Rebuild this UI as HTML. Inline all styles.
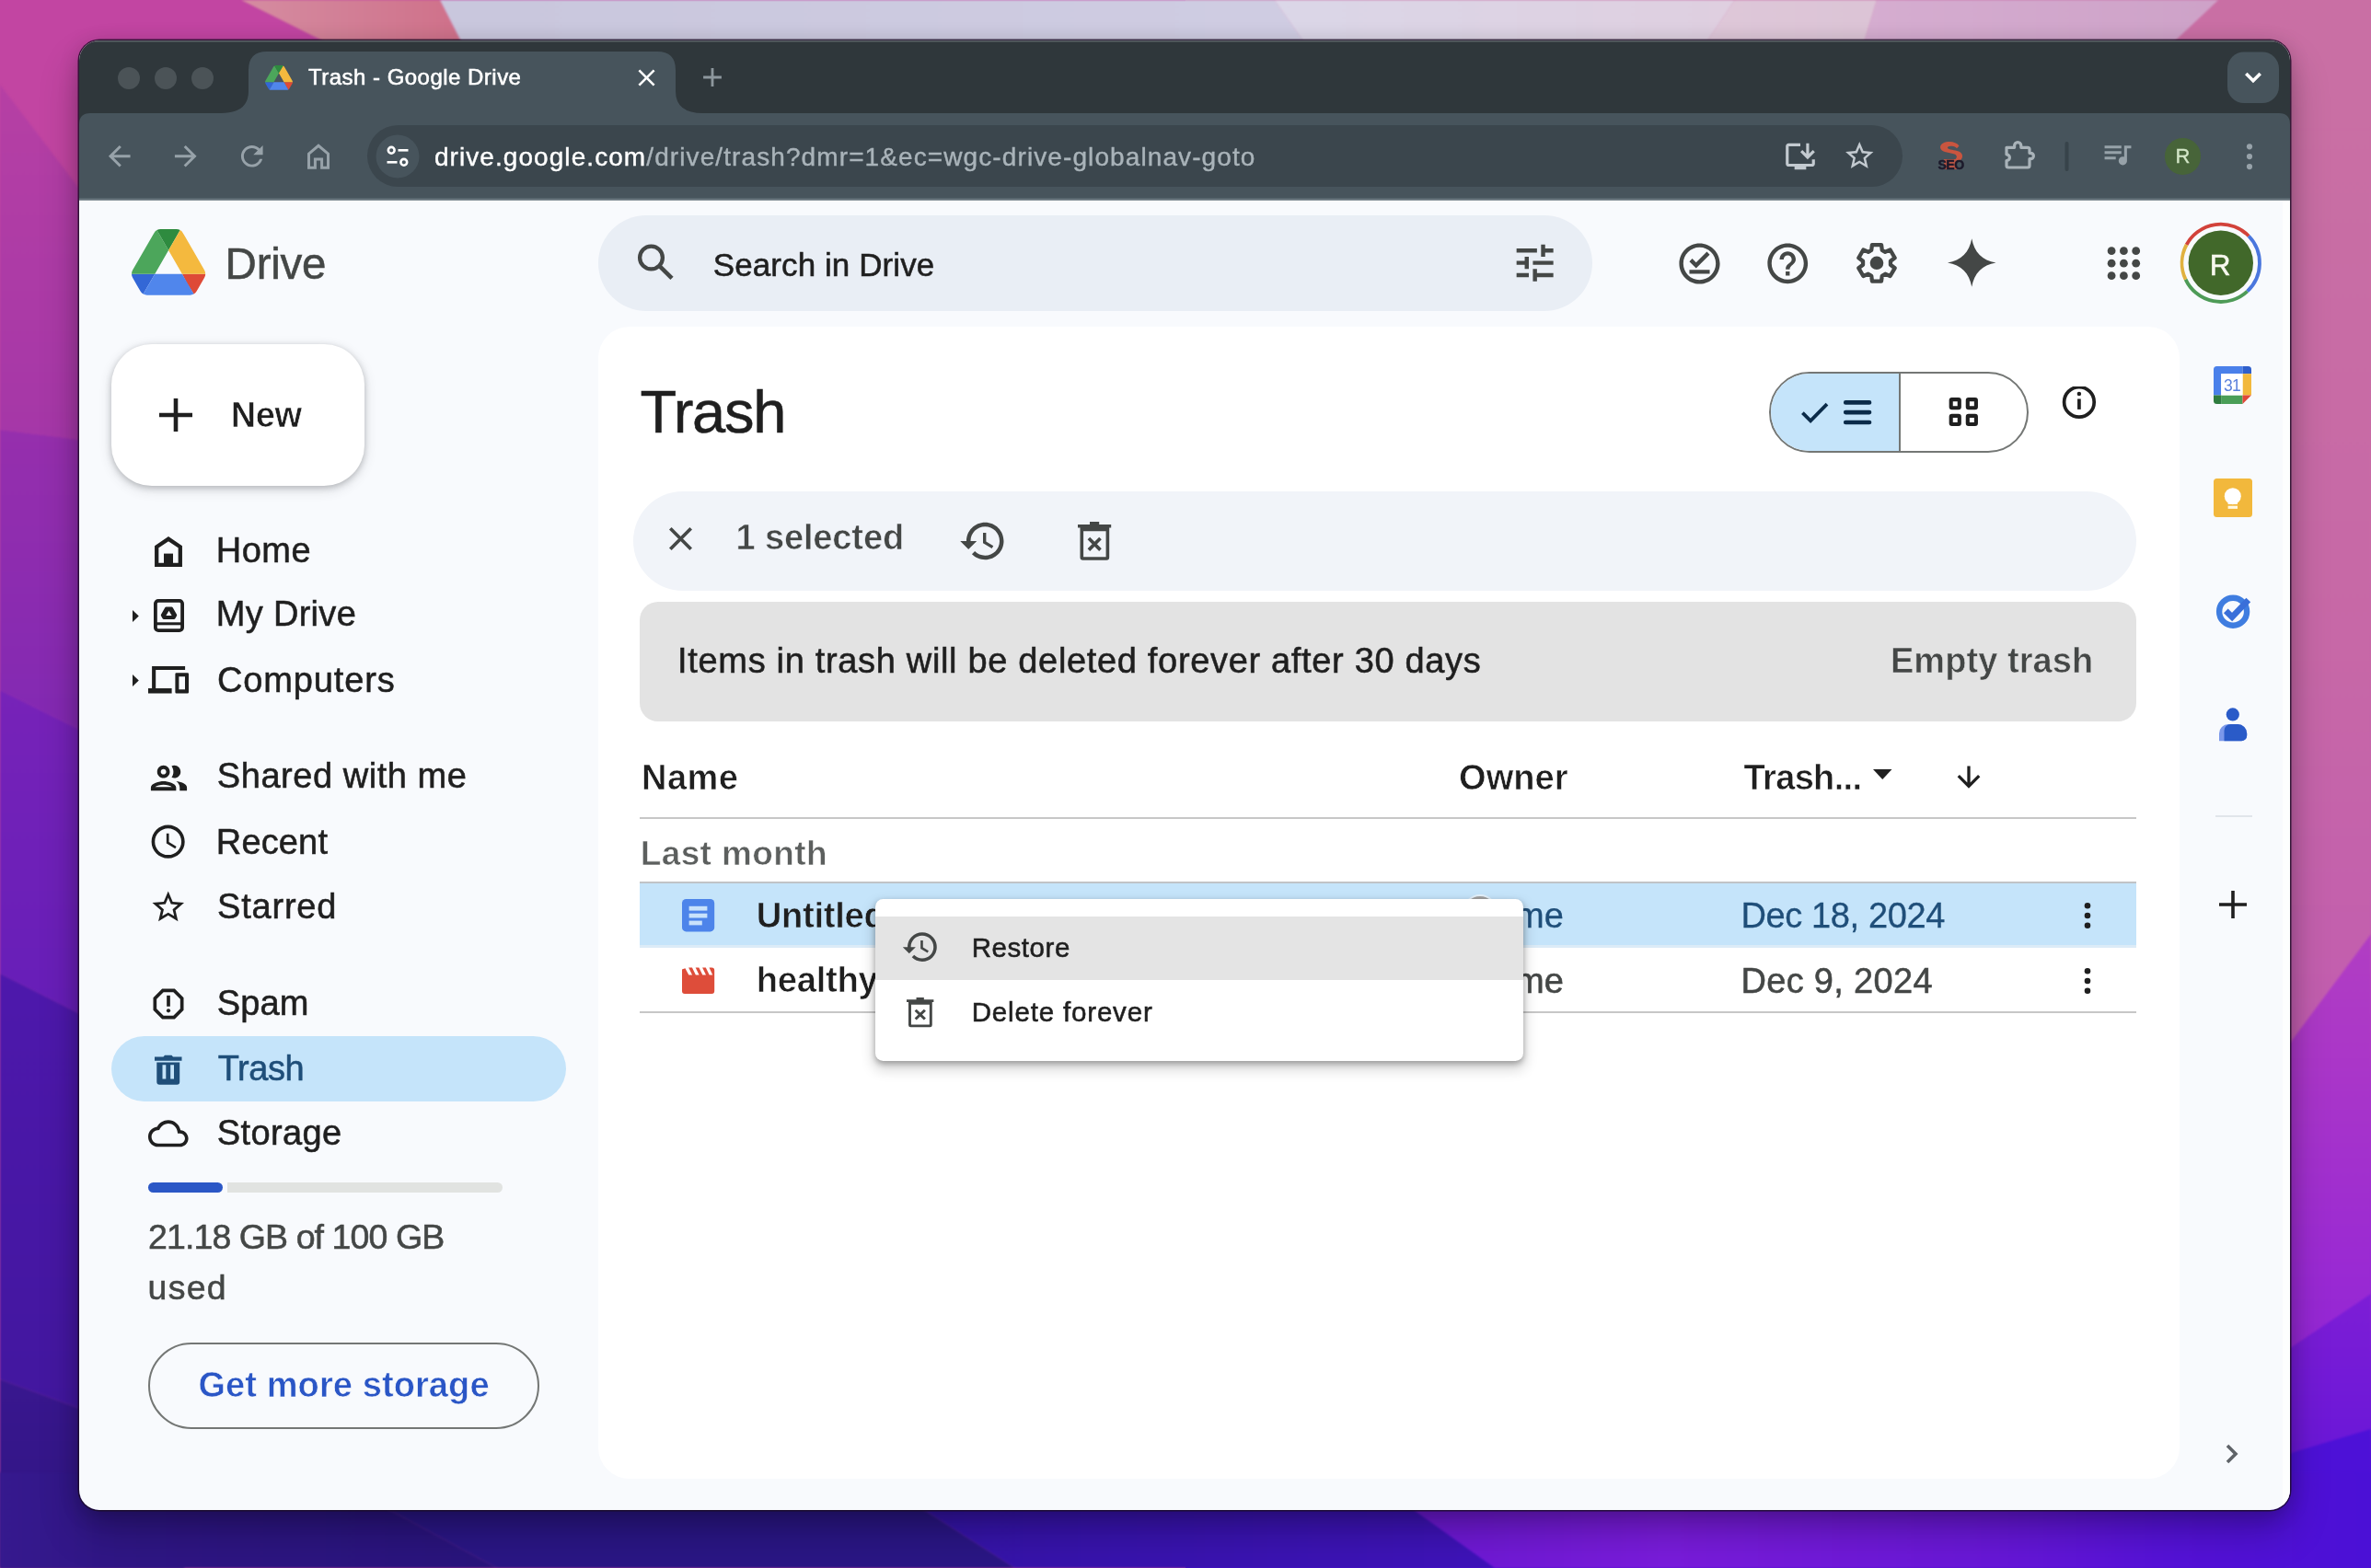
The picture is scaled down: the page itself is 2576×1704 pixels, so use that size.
<!DOCTYPE html>
<html><head><meta charset="utf-8"><title>Trash - Google Drive</title>
<style>
html,body{margin:0;padding:0;width:2576px;height:1704px;overflow:hidden;background:#5a1cb0;}
body{font-family:"Liberation Sans",sans-serif;position:relative;}
.t{position:absolute;white-space:nowrap;line-height:1;}
.i{position:absolute;display:block;overflow:visible;}
.a{position:absolute;}
</style></head><body>
<div class="a" style="left:0;top:0;width:2576px;height:1704px;overflow:hidden;will-change:transform">

<svg class="a" style="left:0;top:0" width="2576" height="1704" viewBox="0 0 2576 1704">
<defs>
<linearGradient id="gl" x1="0" y1="0" x2="0" y2="1">
 <stop offset="0" stop-color="#c145a3"/><stop offset="0.10" stop-color="#bb42a3"/>
 <stop offset="0.13" stop-color="#ad3ba6"/>
 <stop offset="0.26" stop-color="#9c32ab"/><stop offset="0.29" stop-color="#8f2daf"/>
 <stop offset="0.40" stop-color="#8328b3"/>
 <stop offset="0.55" stop-color="#6b1fb8"/><stop offset="0.615" stop-color="#621db6"/>
 <stop offset="0.645" stop-color="#4c18aa"/><stop offset="0.86" stop-color="#43179f"/>
 <stop offset="0.895" stop-color="#38178f"/><stop offset="1" stop-color="#2e1580"/>
</linearGradient>
<linearGradient id="gr" x1="0" y1="0" x2="0" y2="1">
 <stop offset="0" stop-color="#c96fa4"/><stop offset="0.35" stop-color="#c76aa6"/>
 <stop offset="0.60" stop-color="#c25cb0"/><stop offset="0.66" stop-color="#b23fc3"/>
 <stop offset="0.78" stop-color="#9c2bd2"/><stop offset="0.84" stop-color="#8f26d4"/>
 <stop offset="0.87" stop-color="#7a1cd6"/><stop offset="0.915" stop-color="#6a18d7"/>
 <stop offset="0.935" stop-color="#5212d8"/><stop offset="1" stop-color="#4b10d6"/>
</linearGradient>
<linearGradient id="g1" x1="0" y1="0" x2="1" y2="0"><stop offset="0" stop-color="#d58ca1"/><stop offset="1" stop-color="#ce6b85"/></linearGradient>
<linearGradient id="g2" x1="0" y1="0" x2="1" y2="0"><stop offset="0" stop-color="#c9c7dd"/><stop offset="1" stop-color="#d0cde3"/></linearGradient>
<linearGradient id="g3" x1="0" y1="0" x2="1" y2="0"><stop offset="0" stop-color="#dbd7e8"/><stop offset="1" stop-color="#dfcfe0"/></linearGradient>
<linearGradient id="g3b" x1="0" y1="0" x2="1" y2="0"><stop offset="0" stop-color="#dfc9da"/><stop offset="1" stop-color="#dcc4d6"/></linearGradient>
<linearGradient id="g4" x1="0" y1="0" x2="1" y2="0"><stop offset="0" stop-color="#d6aed1"/><stop offset="1" stop-color="#cea2c8"/></linearGradient>
<linearGradient id="gb" x1="0" y1="0" x2="1" y2="0">
 <stop offset="0" stop-color="#2f1582"/><stop offset="0.15" stop-color="#2a157c"/>
 <stop offset="0.40" stop-color="#2c1688"/><stop offset="0.55" stop-color="#3c17b0"/>
 <stop offset="0.62" stop-color="#5c1cc8"/><stop offset="0.72" stop-color="#6d1fd4"/>
 <stop offset="0.85" stop-color="#6419d6"/><stop offset="0.95" stop-color="#4d11d6"/>
 <stop offset="1" stop-color="#4b10d6"/>
</linearGradient>
<linearGradient id="gbA" x1="0" y1="0" x2="1" y2="0"><stop offset="0" stop-color="#36198e"/><stop offset=".25" stop-color="#2f1685"/><stop offset="1" stop-color="#29147c"/></linearGradient>
<linearGradient id="gbC" x1="0" y1="0" x2="1" y2="0"><stop offset="0" stop-color="#3414a6"/><stop offset="1" stop-color="#3f13ba"/></linearGradient>
<linearGradient id="gbD" x1="0" y1="0" x2="1" y2="0"><stop offset="0" stop-color="#6a18d2"/><stop offset=".3" stop-color="#7a1cdc"/><stop offset=".6" stop-color="#6a18d8"/><stop offset=".8" stop-color="#5512d8"/><stop offset="1" stop-color="#4b10d6"/></linearGradient>
<linearGradient id="grA" gradientUnits="userSpaceOnUse" x1="0" y1="140" x2="0" y2="1279"><stop offset="0" stop-color="#c96fa4"/><stop offset=".5" stop-color="#c768a7"/><stop offset=".8" stop-color="#c35fae"/><stop offset="1" stop-color="#bf58b3"/></linearGradient>
<linearGradient id="grB" gradientUnits="userSpaceOnUse" x1="0" y1="1015" x2="0" y2="1538"><stop offset="0" stop-color="#b13ec3"/><stop offset=".25" stop-color="#ab37c8"/><stop offset=".7" stop-color="#9a2ad3"/><stop offset="1" stop-color="#8e24d6"/></linearGradient>
<linearGradient id="grC" gradientUnits="userSpaceOnUse" x1="0" y1="1406" x2="0" y2="1612"><stop offset="0" stop-color="#7d1ed6"/><stop offset="1" stop-color="#6716d8"/></linearGradient>
<linearGradient id="glA" gradientUnits="userSpaceOnUse" x1="0" y1="92" x2="0" y2="480"><stop offset="0" stop-color="#b640a4"/><stop offset="1" stop-color="#a537a8"/></linearGradient>
<linearGradient id="glB" gradientUnits="userSpaceOnUse" x1="0" y1="467" x2="0" y2="800"><stop offset="0" stop-color="#962fad"/><stop offset="1" stop-color="#8229b3"/></linearGradient>
<linearGradient id="glC" gradientUnits="userSpaceOnUse" x1="0" y1="750" x2="0" y2="1110"><stop offset="0" stop-color="#7723b8"/><stop offset="1" stop-color="#661eb8"/></linearGradient>
<linearGradient id="glD" gradientUnits="userSpaceOnUse" x1="0" y1="1058" x2="0" y2="1540"><stop offset="0" stop-color="#4e18ac"/><stop offset="1" stop-color="#42179f"/></linearGradient>
<linearGradient id="glE" gradientUnits="userSpaceOnUse" x1="0" y1="1499" x2="0" y2="1704"><stop offset="0" stop-color="#39178f"/><stop offset="1" stop-color="#2f1582"/></linearGradient>
<linearGradient id="fadeB" x1="0" y1="0" x2="0" y2="1"><stop offset="0" stop-color="#000"/><stop offset="0.45" stop-color="#fff"/></linearGradient>
<mask id="mB"><rect x="0" y="1570" width="2576" height="134" fill="url(#fadeB)"/></mask>
<filter id="bl" x="-2%" y="-20%" width="104%" height="140%" color-interpolation-filters="sRGB"><feGaussianBlur stdDeviation="1.2"/></filter>
</defs>
<rect x="0" y="0" width="1288" height="1704" fill="#c245a2"/>
<g filter="url(#bl)">
<path d="M0 92 L200 354 L200 492 L0 467Z" fill="url(#glA)"/>
<path d="M0 467 L200 492 L200 849 L0 750Z" fill="url(#glB)"/>
<path d="M0 750 L200 849 L200 1159 L0 1058Z" fill="url(#glC)"/>
<path d="M0 1058 L200 1159 L200 1572 L0 1499Z" fill="url(#glD)"/>
<path d="M0 1499 L200 1572 L200 1704 L0 1704Z" fill="url(#glE)"/>
</g>
<rect x="1288" y="0" width="1288" height="1704" fill="url(#gr)"/>
<g filter="url(#bl)">
<path d="M2380 140 L2576 140 L2576 1015 L2380 1279Z" fill="url(#grA)"/>
<path d="M2576 1015 L2380 1279 L2380 1538 L2576 1406Z" fill="url(#grB)"/>
<path d="M2576 1406 L2380 1538 L2380 1612 L2576 1553Z" fill="url(#grC)"/>
<path d="M2576 1553 L2380 1612 L2380 1704 L2576 1704Z" fill="#4d11d7"/>
</g>
<g filter="url(#bl)">
<path d="M262 0 L478 0 L549.6 140 L542.0 140Z" fill="url(#g1)"/>
<path d="M478 0 L1384.5 0 L1483.8 140 L549.6 140Z" fill="url(#g2)"/>
<path d="M1384.5 0 L1884.6 0 L1791.5 140 L1483.8 140Z" fill="url(#g3)"/>
<path d="M1884.6 0 L2039 0 L1996.7 140 L1791.5 140Z" fill="url(#g3b)"/>
<path d="M2039 0 L2410.4 0 L2261.9 140 L1996.7 140Z" fill="url(#g4)"/>
<path d="M2410.4 0 L2576 0 L2576 140 L2261.9 140Z" fill="#c96fa4"/>
</g>
<g filter="url(#bl)">
<path d="M0 1600 L0 1704 L539.8 1704 L348 1600Z" fill="url(#gbA)"/>
<path d="M348 1600 L539.8 1704 L1102.700 1704 L940 1600Z" fill="#2a1685"/>
<path d="M940 1600 L1102.700 1704 L1624 1704 L1479 1600Z" fill="url(#gbC)"/>
<path d="M1479 1600 L1624 1704 L2576 1704 L2576 1600Z" fill="url(#gbD)"/>
</g>
</svg>


<div class="a" style="left:86px;top:44px;width:2402px;height:1597px;border-radius:22px;box-shadow:0 0 0 1.5px rgba(25,10,35,.8),0 24px 44px 0px rgba(0,0,0,.24),0 5px 22px 0 rgba(0,0,0,.20);"></div>
<div id="win" class="a" style="left:86px;top:44px;width:2402px;height:1597px;border-radius:22px;overflow:hidden;background:#f8fafd;">
<div class="a" style="left:-86px;top:-44px;width:2576px;height:1704px;">
<div class="a" style="left:86px;top:44px;width:2402px;height:173px;background:#2f373b"></div>

<svg class="a" style="left:0;top:0" width="2576" height="230" viewBox="0 0 2576 230">
<path d="M86 217.500 V135 Q86 123 98 123 H240 Q270 123 270 99 V76 Q270 56 290 56 H714 Q734 56 734 76 V99 Q734 123 764 123 H2476 Q2488 123 2488 135 V217.500 Z" fill="#47545c"/>
<rect x="86" y="215.500" width="2402" height="2" fill="#65727a"/>
<rect x="399" y="136" width="1668" height="67" rx="33.500" fill="#3b464d"/>
<circle cx="432" cy="170" r="23.500" fill="#47545c"/>
<rect x="2420" y="56.500" width="56" height="55.500" rx="18" fill="#47545c"/>
<circle cx="140" cy="85" r="12" fill="#4b5357"/><circle cx="180" cy="85" r="12" fill="#4b5357"/><circle cx="220" cy="85" r="12" fill="#4b5357"/>
<rect x="86" y="44" width="2402" height="1.500" fill="#6a7176" opacity=".75"/>
<rect x="2243.500" y="154" width="4" height="32" rx="2" fill="#37434a"/>
<path d="M2440.300 80 L2448 87.700 L2455.700 80" fill="none" stroke="#fff" stroke-width="3.600"/>
</svg>
<svg class="i" style="left:287.500px;top:70.500px" width="30" height="26.800" viewBox="0 0 87.300 78"><path d="m6.6 66.85 3.85 6.65c.8 1.4 1.95 2.5 3.3 3.3l13.750-23.800h-27.500c0 1.550.4 3.100 1.200 4.500z" fill="#3367d6"/>
<path d="m43.650 25-13.750-23.800c-1.350.8-2.500 1.900-3.300 3.300l-25.400 44a9.060 9.060 0 0 0 -1.200 4.500h27.500z" fill="#4ca65b"/>
<path d="m73.550 76.800c1.350-.8 2.500-1.900 3.300-3.300l1.600-2.750 7.650-13.250c.8-1.400 1.200-2.950 1.200-4.500h-27.502l5.852 11.500z" fill="#de4a37"/>
<path d="m43.650 25 13.750-23.800c-1.350-.8-2.900-1.200-4.500-1.200h-18.500c-1.600 0-3.150.45-4.500 1.200z" fill="#2e8b3f"/>
<path d="m59.800 53h-32.300l-13.750 23.800c1.350.8 2.900 1.200 4.500 1.200h50.800c1.600 0 3.150-.45 4.500-1.200z" fill="#5086ec"/>
<path d="m73.400 26.500-12.700-22c-.8-1.400-1.950-2.500-3.300-3.300l-13.750 23.800 16.150 28h27.450c0-1.550-.4-3.100-1.200-4.500z" fill="#f4b93e"/></svg>
<div class="t" style="left:335px;top:72.1px;font-size:24px;color:#fff;font-weight:400;-webkit-text-stroke:0.55px currentColor;letter-spacing:0.48px;">Trash - Google Drive</div>
<svg class="i" style="left:686.5px;top:68.5px;" width="31" height="31" viewBox="0 0 24 24"><path d="M19 6.410L17.590 5 12 10.590 6.410 5 5 6.410 10.590 12 5 17.590 6.410 19 12 13.410 17.590 19 19 17.590 13.410 12z" fill="#fff"/></svg>
<svg class="i" style="left:757.0px;top:67.0px;" width="34" height="34" viewBox="0 0 24 24"><path d="M19 13h-6v6h-2v-6H5v-2h6V5h2v6h6v2z" fill="#8d979d"/></svg>
<svg class="i" style="left:112.2px;top:152.2px;" width="35.5" height="35.5" viewBox="0 0 24 24"><path d="M20 11H7.830l5.590-5.590L12 4l-8 8 8 8 1.410-1.410L7.830 13H20v-2z" fill="#97a2a9"/></svg>
<svg class="i" style="left:183.9px;top:152.2px;" width="35.5" height="35.5" viewBox="0 0 24 24"><path d="M12 4l-1.410 1.410L16.170 11H4v2h12.170l-5.580 5.590L12 20l8-8z" fill="#97a2a9"/></svg>
<svg class="i" style="left:256.4px;top:152.2px;" width="35.5" height="35.5" viewBox="0 0 24 24"><path d="M17.650 6.350C16.200 4.900 14.210 4 12 4c-4.420 0-7.990 3.580-7.990 8s3.570 8 7.990 8c3.730 0 6.840-2.550 7.730-6h-2.080c-.82 2.330-3.040 4-5.650 4-3.310 0-6-2.690-6-6s2.690-6 6-6c1.660 0 3.140.69 4.220 1.780L13 11h7V4l-2.350 2.350z" fill="#97a2a9"/></svg>
<svg class="i" style="left:332px;top:154px" width="28" height="32" viewBox="0 0 28 32"><path d="M3.500 28.300 V13.200 L14 4.300 L24.500 13.200 V28.300 H17.600 V19 H10.400 V28.300 Z" fill="none" stroke="#97a2a9" stroke-width="3" stroke-linejoin="miter"/></svg>
<svg class="i" style="left:417px;top:155px" width="30" height="30" viewBox="0 0 30 30">
<circle cx="8.200" cy="8.300" r="3.400" fill="none" stroke="#fff" stroke-width="2.600"/><rect x="15.500" y="7" width="11" height="2.600" fill="#fff"/>
<circle cx="21.800" cy="21.300" r="3.400" fill="none" stroke="#fff" stroke-width="2.600"/><rect x="3.500" y="20" width="11" height="2.600" fill="#fff"/></svg>
<div class="t" style="left:471.900px;top:156.6px;font-size:28px;letter-spacing:1.07px;color:#fff;-webkit-text-stroke:.4px currentColor">drive.google.com<span style="color:#a9b3b9;letter-spacing:1.1px">/drive/trash?dmr=1&amp;ec=wgc-drive-globalnav-goto</span></div>
<svg class="i" style="left:1937.1px;top:150.6px;" width="38" height="38" viewBox="0 0 24 24"><path d="M20 17H4V5h8V3H4c-1.110 0-2 .89-2 2v12c0 1.100.89 2 2 2h4v2h8v-2h4c1.100 0 2-.9 2-2v-3h-2v3z M17 14l5-5-1.410-1.410L18 10.170V3h-2v7.170l-2.590-2.580L12 9z" fill="#c3cad0"/></svg>
<svg class="i" style="left:2001.5px;top:151.2px;" width="36.5" height="36.5" viewBox="0 0 24 24"><path d="M22 9.240l-7.190-.62L12 2 9.190 8.630 2 9.240l5.460 4.730L5.820 21 12 17.270 18.180 21l-1.630-7.030L22 9.240zM12 15.400l-3.760 2.270 1-4.280-3.320-2.880 4.380-.38L12 6.100l1.710 4.040 4.380.38-3.320 2.880 1 4.280L12 15.400z" fill="#c3cad0"/></svg>
<svg class="i" style="left:2103px;top:152px" width="33" height="34" viewBox="0 0 33 34">
<path d="M25.500 6.500 C23 2.500 17 1.200 11.500 2.200 C6.500 3.200 4 6.600 5.600 10 C7.500 13.600 16 13.800 20.500 15.600 C24 17 23.500 20.500 20 22 L27 22 C30.500 19 29.500 14.500 25 12.600 C21 10.900 14 10.800 13 9 C12.300 7.600 14.500 6.500 17.500 6.800 C20 7 22 8 23 9.200 Z" fill="#c9553f"/>
<rect x="9" y="21" width="14" height="11" fill="#c9553f" opacity=".85"/>
<text x="16.500" y="31.500" font-family="Liberation Sans, sans-serif" font-weight="700" font-size="14" text-anchor="middle" fill="#1c1a2b" stroke="#1c1a2b" stroke-width=".5" letter-spacing="-.5">SEO</text></svg>
<svg class="i" style="left:2176.500px;top:152px" width="35" height="34" viewBox="0 0 35 34"><path d="M3 8.300 H11.600 V6.200 A3.600 3.600 0 0 1 18.800 6.200 V8.300 H26 A2 2 0 0 1 28 10.300 V14.300 H29.200 A3.200 3.200 0 0 1 29.200 20.700 H28 V28 A2 2 0 0 1 26 30 H5 A2 2 0 0 1 3 28 V22.600 A3.400 3.400 0 0 0 3 15.800 Z" fill="none" stroke="#a9b3b9" stroke-width="3.200" stroke-linejoin="round"/></svg>
<svg class="i" style="left:2281.6px;top:149.1px;" width="36.5" height="36.5" viewBox="0 0 24 24"><path d="M15 6H3v2h12V6zm0 4H3v2h12v-2zM3 16h8v-2H3v2zM17 6v8.180c-.31-.11-.65-.18-1-.18-1.660 0-3 1.340-3 3s1.340 3 3 3 3-1.340 3-3V8h3V6h-5z" fill="#97a2a9"/></svg>
<div class="a" style="left:2351.500px;top:150px;width:39.500px;height:39.500px;border-radius:50%;background:#476439"></div>
<div class="t" style="left:2363.6px;top:159.2px;font-size:22px;color:#d3e6c7;font-weight:400;-webkit-text-stroke:0.3px currentColor;letter-spacing:0px;">R</div>
<svg class="i" style="left:2438px;top:154px" width="12" height="32" viewBox="0 0 12 32"><circle cx="6" cy="5.300" r="3.100" fill="#97a2a9"/><circle cx="6" cy="16.100" r="3.100" fill="#97a2a9"/><circle cx="6" cy="27.100" r="3.100" fill="#97a2a9"/></svg>
<svg class="i" style="left:143px;top:249px" width="80.200" height="71.700" viewBox="0 0 87.300 78"><path d="m6.6 66.85 3.85 6.65c.8 1.4 1.95 2.5 3.3 3.3l13.750-23.800h-27.500c0 1.550.4 3.100 1.200 4.500z" fill="#3367d6"/>
<path d="m43.650 25-13.750-23.800c-1.350.8-2.500 1.900-3.300 3.300l-25.400 44a9.060 9.060 0 0 0 -1.200 4.500h27.500z" fill="#4ca65b"/>
<path d="m73.550 76.800c1.350-.8 2.500-1.900 3.300-3.300l1.600-2.750 7.650-13.250c.8-1.400 1.200-2.950 1.200-4.500h-27.502l5.852 11.500z" fill="#de4a37"/>
<path d="m43.650 25 13.750-23.800c-1.350-.8-2.900-1.200-4.500-1.200h-18.500c-1.600 0-3.150.45-4.500 1.200z" fill="#2e8b3f"/>
<path d="m59.800 53h-32.300l-13.750 23.800c1.350.8 2.900 1.200 4.500 1.200h50.800c1.600 0 3.150-.45 4.500-1.200z" fill="#5086ec"/>
<path d="m73.400 26.500-12.700-22c-.8-1.400-1.950-2.500-3.300-3.300l-13.750 23.800 16.150 28h27.450c0-1.550-.4-3.100-1.200-4.500z" fill="#f4b93e"/></svg>
<div class="t" style="left:244.6px;top:263.4px;font-size:47.5px;color:#444746;font-weight:400;-webkit-text-stroke:0.55px currentColor;letter-spacing:-0.26px;">Drive</div>
<div class="a" style="left:650px;top:234px;width:1080px;height:104px;border-radius:52px;background:#e9eef5"></div>
<svg class="i" style="left:690px;top:262px" width="46" height="46" viewBox="0 0 46 46"><circle cx="17.500" cy="18" r="12.400" fill="none" stroke="#444746" stroke-width="4.300"/><path d="M26.300 26.800 L40 40.300" stroke="#444746" stroke-width="4.600" fill="none"/></svg>
<div class="t" style="left:774.8px;top:269.7px;font-size:35px;color:#1f1f1f;font-weight:400;-webkit-text-stroke:0.55px currentColor;letter-spacing:0.08px;">Search in Drive</div>
<svg class="i" style="left:1641.3px;top:259.2px;" width="53.3" height="53.3" viewBox="0 0 24 24"><path d="M3 17v2h6v-2H3zM3 5v2h10V5H3zm10 16v-2h8v-2h-8v-2h-2v6h2zM7 9v2H3v2h4v2h2V9H7zm14 4v-2H11v2h10zm-6-4h2V7h4V5h-4V3h-2v6z" fill="#444746"/></svg>
<svg class="i" style="left:1819.5px;top:259.5px;" width="53" height="53" viewBox="0 0 24 24"><path d="M12 2C6.500 2 2 6.500 2 12s4.500 10 10 10 10-4.500 10-10S17.500 2 12 2zm0 18c-4.410 0-8-3.590-8-8s3.590-8 8-8 8 3.590 8 8-3.590 8-8 8zm-5-5h10v2H7zm3.300-.7L7 10.960l1.400-1.400 1.900 1.900 5.300-5.300L17 7.560z" fill="#444746"/></svg>
<svg class="i" style="left:1916.2px;top:259.8px;" width="52.5" height="52.5" viewBox="0 0 24 24"><path d="M11 18h2v-2h-2v2zm1-16C6.480 2 2 6.480 2 12s4.480 10 10 10 10-4.480 10-10S17.520 2 12 2zm0 18c-4.410 0-8-3.590-8-8s3.590-8 8-8 8 3.590 8 8-3.590 8-8 8zm0-14c-2.210 0-4 1.790-4 4h2c0-1.100.9-2 2-2s2 .9 2 2c0 2-3 1.750-3 5h2c0-2.250 3-2.500 3-5 0-2.210-1.790-4-4-4z" fill="#444746"/></svg>
<svg class="a" style="left:2010px;top:256px" width="60" height="60" viewBox="2010 256 60 60"><path d="M2033.22 271.85 L2033.96 266.03 L2044.04 266.03 L2044.78 271.85 L2048.19 273.82 L2053.60 271.55 L2058.64 280.28 L2053.97 283.83 L2053.97 287.77 L2058.64 291.32 L2053.60 300.05 L2048.19 297.78 L2044.78 299.75 L2044.04 305.57 L2033.96 305.57 L2033.22 299.75 L2029.81 297.78 L2024.40 300.05 L2019.36 291.32 L2024.03 287.77 L2024.03 283.83 L2019.36 280.28 L2024.40 271.55 L2029.81 273.82Z" fill="none" stroke="#444746" stroke-width="4.300" stroke-linejoin="round"/><circle cx="2039" cy="285.800" r="7.300" fill="#444746"/></svg>
<svg class="i" style="left:2116px;top:259px" width="52.500" height="53" viewBox="0 0 24 24"><path d="M12 0 C13.200 6.800 17.200 10.800 24 12 C17.200 13.200 13.200 17.200 12 24 C10.800 17.200 6.800 13.200 0 12 C6.800 10.800 10.800 6.800 12 0z" fill="#444746"/></svg>
<svg class="a" style="left:0;top:0" width="2576" height="360" viewBox="0 0 2576 360"><circle cx="2294.1" cy="272.7" r="4.400" fill="#444746"/><circle cx="2294.1" cy="286.2" r="4.400" fill="#444746"/><circle cx="2294.1" cy="299.7" r="4.400" fill="#444746"/><circle cx="2307.4" cy="272.7" r="4.400" fill="#444746"/><circle cx="2307.4" cy="286.2" r="4.400" fill="#444746"/><circle cx="2307.4" cy="299.7" r="4.400" fill="#444746"/><circle cx="2320.7" cy="272.7" r="4.400" fill="#444746"/><circle cx="2320.7" cy="286.2" r="4.400" fill="#444746"/><circle cx="2320.7" cy="299.7" r="4.400" fill="#444746"/><circle cx="2412.800" cy="285.800" r="35.200" fill="#41682a"/><path d="M2375.54 265.99 A42.2 42.2 0 0 1 2443.16 256.49" stroke="#d2423a" stroke-width="3.800" fill="none"/><path d="M2443.16 256.49 A42.2 42.2 0 0 1 2441.58 316.66" stroke="#4a76dd" stroke-width="3.800" fill="none"/><path d="M2441.58 316.66 A42.2 42.2 0 0 1 2374.55 303.63" stroke="#4e9b57" stroke-width="3.800" fill="none"/><path d="M2374.55 303.63 A42.2 42.2 0 0 1 2375.54 265.99" stroke="#e0b13f" stroke-width="3.800" fill="none"/></svg>
<div class="t" style="left:2400.8px;top:273.0px;font-size:31.5px;color:#f7f7ee;font-weight:400;-webkit-text-stroke:0.55px currentColor;letter-spacing:0px;">R</div>
<div class="a" style="left:121px;top:374px;width:275px;height:154px;border-radius:44px;background:#fff;box-shadow:0 2px 6px rgba(60,64,67,.28),0 4px 12px 2px rgba(60,64,67,.13)"></div>
<svg class="i" style="left:173px;top:432.800px" width="36" height="36" viewBox="0 0 36 36"><path d="M18 0v36M0 18h36" stroke="#1f1f1f" stroke-width="4.600" fill="none"/></svg>
<div class="t" style="left:250.7px;top:431.6px;font-size:38px;color:#1f1f1f;font-weight:700;-webkit-text-stroke:.6px #fff;letter-spacing:-0.34px;">New</div>
<div class="a" style="left:121px;top:1126px;width:493.500px;height:70.500px;border-radius:36px;background:#c5e4fa"></div>
<div class="t" style="left:234.8px;top:578.7px;font-size:38px;color:#1f1f1f;font-weight:400;-webkit-text-stroke:0.55px currentColor;letter-spacing:0.5px;">Home</div>
<div class="t" style="left:234.8px;top:648.3px;font-size:38px;color:#1f1f1f;font-weight:400;-webkit-text-stroke:0.55px currentColor;letter-spacing:0.3px;">My Drive</div>
<div class="t" style="left:236px;top:719.8px;font-size:38px;color:#1f1f1f;font-weight:400;-webkit-text-stroke:0.55px currentColor;letter-spacing:0.85px;">Computers</div>
<div class="t" style="left:235.8px;top:824.4px;font-size:38px;color:#1f1f1f;font-weight:400;-webkit-text-stroke:0.55px currentColor;letter-spacing:0.55px;">Shared with me</div>
<div class="t" style="left:234.8px;top:895.6px;font-size:38px;color:#1f1f1f;font-weight:400;-webkit-text-stroke:0.55px currentColor;letter-spacing:0.15px;">Recent</div>
<div class="t" style="left:236px;top:965.8px;font-size:38px;color:#1f1f1f;font-weight:400;-webkit-text-stroke:0.55px currentColor;letter-spacing:0.8px;">Starred</div>
<div class="t" style="left:235.7px;top:1071.4px;font-size:38px;color:#1f1f1f;font-weight:400;-webkit-text-stroke:0.55px currentColor;letter-spacing:0.13px;">Spam</div>
<div class="t" style="left:235.7px;top:1211.5px;font-size:38px;color:#1f1f1f;font-weight:400;-webkit-text-stroke:0.55px currentColor;letter-spacing:0.4px;">Storage</div>
<div class="t" style="left:236.7px;top:1141.5px;font-size:38px;color:#1f4e79;font-weight:400;-webkit-text-stroke:0.55px currentColor;letter-spacing:-0.42px;">Trash</div>
<svg class="i" style="left:168.200px;top:582.500px" width="30" height="33" viewBox="0 0 30 33"><path d="M2.200 30.900 V11.300 L15 2.600 L27.800 11.300 V30.900 Z" fill="none" stroke="#1f1f1f" stroke-width="4.300" stroke-linejoin="miter"/><rect x="10" y="18.600" width="10" height="12.500" fill="#1f1f1f"/></svg>
<svg class="i" style="left:144.400px;top:662.5px" width="7" height="13" viewBox="0 0 7 13"><path d="M0 0 L6.800 6.500 L0 13z" fill="#1f1f1f"/></svg>
<svg class="i" style="left:144.400px;top:732.5px" width="7" height="13" viewBox="0 0 7 13"><path d="M0 0 L6.800 6.500 L0 13z" fill="#1f1f1f"/></svg>
<svg class="i" style="left:166.500px;top:651px" width="33" height="36" viewBox="0 0 33 36">
<rect x="1.900" y="1.900" width="29.200" height="32.200" rx="3.200" fill="none" stroke="#1f1f1f" stroke-width="3.800"/>
<rect x="2" y="25.300" width="29" height="3" fill="#1f1f1f"/>
<path d="M13.600 8.600 h5.800 a1.500 1.500 0 0 1 1.300 .75 l4.300 7.400 a1.500 1.500 0 0 1 0 1.500 l-1.700 3 a1.500 1.500 0 0 1 -1.300 .75 h-11 a1.500 1.500 0 0 1 -1.300 -.75 l-1.700 -3 a1.500 1.500 0 0 1 0 -1.500 l4.300 -7.400 a1.500 1.500 0 0 1 1.300 -.75z M16.500 12.800 l-3.100 5.300 h6.200z" fill="#1f1f1f" fill-rule="evenodd"/>
</svg>
<svg class="i" style="left:161px;top:724.200px" width="44" height="30" viewBox="0 0 44 30">
<path d="M4.100 0 H40.100 V4.100 H8.200 V24 H25.600 V29.400 H0 V24 H4.100 Z" fill="#1f1f1f"/>
<path d="M30.600 7.200 h12.200 a1.200 1.200 0 0 1 1.200 1.200 v19.800 a1.200 1.200 0 0 1 -1.200 1.200 h-12.200 a1.200 1.200 0 0 1 -1.200 -1.200 v-19.800 a1.200 1.200 0 0 1 1.200 -1.200z M33.400 11.300 v14 h6.600 v-14z" fill="#1f1f1f" fill-rule="evenodd"/>
</svg>
<svg class="i" style="left:159.5px;top:821.7px;" width="47" height="47" viewBox="0 0 24 24"><path d="M9 13.750c-2.340 0-7 1.170-7 3.500V19h14v-1.750c0-2.330-4.660-3.500-7-3.500zM4.340 17c.84-.58 2.870-1.250 4.660-1.250s3.820.67 4.660 1.250H4.340zM9 12c1.930 0 3.500-1.570 3.500-3.500S10.930 5 9 5 5.500 6.570 5.500 8.500 7.070 12 9 12zm0-5c.83 0 1.500.67 1.500 1.500S9.830 10 9 10s-1.500-.67-1.500-1.500S8.170 7 9 7zm7.040 6.810c1.160.84 1.960 1.960 1.960 3.440V19h4v-1.750c0-2.020-3.500-3.170-5.960-3.440zM15 12c1.930 0 3.500-1.570 3.500-3.500S16.930 5 15 5c-.54 0-1.040.13-1.500.35.630.89 1 1.980 1 3.150s-.37 2.260-1 3.150c.46.22.96.35 1.500.35z" fill="#1f1f1f"/></svg>
<svg class="i" style="left:161.4px;top:893.1px;" width="43.3" height="43.3" viewBox="0 0 24 24"><path d="M11.990 2C6.470 2 2 6.480 2 12s4.470 10 9.990 10C17.520 22 22 17.520 22 12S17.520 2 11.990 2zM12 20c-4.420 0-8-3.580-8-8s3.580-8 8-8 8 3.580 8 8-3.580 8-8 8zm.5-13H11v6l5.250 3.150.75-1.230-4.500-2.670z" fill="#1f1f1f"/></svg>
<svg class="i" style="left:162.3px;top:965.1px;" width="41.5" height="41.5" viewBox="0 0 24 24"><path d="M22 9.240l-7.190-.62L12 2 9.190 8.630 2 9.240l5.460 4.730L5.820 21 12 17.270 18.180 21l-1.630-7.030L22 9.240zM12 15.400l-3.760 2.270 1-4.280-3.320-2.880 4.380-.38L12 6.100l1.710 4.040 4.380.38-3.320 2.880 1 4.280L12 15.400z" fill="#1f1f1f"/></svg>
<svg class="i" style="left:161.1px;top:1069.0px;" width="44" height="44" viewBox="0 0 24 24"><path d="M15.730 3H8.270L3 8.270v7.460L8.270 21h7.460L21 15.730V8.270L15.730 3zM19 14.900L14.900 19H9.100L5 14.900V9.100L9.100 5h5.800L19 9.100v5.800z" fill="#1f1f1f"/><rect x="11" y="7" width="2" height="6.500" fill="#1f1f1f"/><circle cx="12" cy="16" r="1.150" fill="#1f1f1f"/></svg>
<svg class="i" style="left:168.200px;top:1145.500px" width="29.500" height="33" viewBox="0 0 29.500 33">
<path d="M0 2.600 H9.500 L11 .8 H18.500 L20 2.600 H29.500 V6.800 H0Z" fill="#1f4e79"/>
<path d="M2.300 8.600 H27.200 V29.800 a3 3 0 0 1 -3 3 H5.300 a3 3 0 0 1 -3 -3Z M8.500 11.200 v15.300 h3.800 v-15.300z M17.200 11.200 v15.300 h3.800 v-15.300z" fill="#1f4e79" fill-rule="evenodd"/></svg>
<svg class="i" style="left:161.3px;top:1210.4px;" width="43.6" height="43.6" viewBox="0 0 24 24"><path d="M12 6c2.620 0 4.880 1.860 5.390 4.430l.3 1.500 1.530.11c1.560.1 2.780 1.410 2.780 2.960 0 1.650-1.350 3-3 3H6c-2.210 0-4-1.790-4-4 0-2.050 1.530-3.760 3.560-3.970l1.070-.11.5-.95C8.080 7.140 9.940 6 12 6m0-2C9.110 4 6.600 5.640 5.350 8.040 2.340 8.360 0 10.910 0 14c0 3.310 2.690 6 6 6h13c2.760 0 5-2.240 5-5 0-2.640-2.050-4.780-4.650-4.960C18.670 6.590 15.640 4 12 4z" fill="#1f1f1f"/></svg>
<div class="a" style="left:161px;top:1285px;width:385px;height:10.500px;border-radius:5.500px;background:#e1e3e1"></div>
<div class="a" style="left:161px;top:1283px;width:86px;height:14.500px;background:#f8fafd"></div>
<div class="a" style="left:161px;top:1285px;width:81px;height:10.500px;border-radius:5.500px;background:#2b57c6"></div>
<div class="t" style="left:161.1px;top:1326.3px;font-size:37.5px;color:#444746;font-weight:400;-webkit-text-stroke:0.55px currentColor;letter-spacing:-0.92px;">21.18 GB of 100 GB</div>
<div class="t" style="left:160.5px;top:1380.9px;font-size:37.5px;color:#444746;font-weight:400;-webkit-text-stroke:0.55px currentColor;letter-spacing:1.3px;">used</div>
<div class="a" style="left:161px;top:1459px;width:425px;height:94px;border-radius:47px;border:2px solid #747775;box-sizing:border-box"></div>
<div class="t" style="left:215.4px;top:1486.2px;font-size:38px;color:#2a56c6;font-weight:700;-webkit-text-stroke:.6px #f8fafd;letter-spacing:0.1px;">Get more storage</div>
<div class="a" style="left:650px;top:355px;width:1717.500px;height:1252px;border-radius:34px;background:#fff"></div>
<div class="t" style="left:695.6px;top:414.7px;font-size:65px;color:#1f1f1f;font-weight:400;-webkit-text-stroke:0.55px currentColor;letter-spacing:-1.25px;">Trash</div>
<div class="a" style="left:1922px;top:404px;width:282px;height:87.500px;border-radius:44px;border:2px solid #747775;box-sizing:border-box;overflow:hidden;background:#fff">
<div class="a" style="left:0;top:0;width:139px;height:100%;background:#c5e4fa"></div>
<div class="a" style="left:139px;top:0;width:2px;height:100%;background:#747775"></div></div>
<svg class="a" style="left:1940px;top:420px" width="350" height="60" viewBox="1940 420 350 60">
<path d="M1958.400 448.600 L1967.100 457.300 L1985 439.200" fill="none" stroke="#0b2b49" stroke-width="3.800"/>
<path d="M2005.200 437.400 H2031 M2005.200 448.100 H2031 M2005.200 459 H2031" stroke="#0b2b49" stroke-width="4.600" stroke-linecap="round" fill="none"/>
<g fill="none" stroke="#1f1f1f" stroke-width="4.100" stroke-linejoin="round">
<rect x="2119.700" y="434.100" width="9.100" height="9.100" rx="1"/><rect x="2137.800" y="434.100" width="9.100" height="9.100" rx="1"/>
<rect x="2119.700" y="451.900" width="9.100" height="9.100" rx="1"/><rect x="2137.800" y="451.900" width="9.100" height="9.100" rx="1"/></g>
<circle cx="2258.900" cy="436.900" r="16.300" fill="none" stroke="#1f1f1f" stroke-width="3.700"/>
<rect x="2257.050" y="434.500" width="3.700" height="11.400" fill="#1f1f1f" transform="translate(0,-1)"/><circle cx="2258.900" cy="428.100" r="2.250" fill="#1f1f1f"/>
</svg>
<div class="a" style="left:687.500px;top:534px;width:1633.500px;height:107.500px;border-radius:54px;background:#f1f4f9"></div>
<svg class="i" style="left:726.500px;top:572.700px" width="25" height="25" viewBox="0 0 25 25"><path d="M1.300 1.300 L23.700 23.700 M23.700 1.300 L1.300 23.700" stroke="#444746" stroke-width="3.700" fill="none"/></svg>
<div class="t" style="left:799.5px;top:565.0px;font-size:38px;color:#444746;font-weight:700;-webkit-text-stroke:.6px #f1f4f9;letter-spacing:-0.13px;">1 selected</div>
<svg class="i" style="left:1041.300px;top:560.800px" width="54" height="54" viewBox="0 0 24 24"><path d="M13 3c-4.970 0-9 4.030-9 9H1l3.890 3.890.07.14L9 12H6c0-3.870 3.130-7 7-7s7 3.130 7 7-3.130 7-7 7c-1.930 0-3.680-.79-4.940-2.060l-1.420 1.420C8.270 19.990 10.510 21 13 21c4.970 0 9-4.030 9-9s-4.030-9-9-9zm-1 5v5l4.280 2.540.72-1.210-3.500-2.080V8H12z" fill="#444746"/></svg>
<svg class="i" style="left:1170.900px;top:566.800px" width="36.200" height="41.800" viewBox="0 0 36.200 41.800"><path d="M13 0 H23.200 V3 H36.200 V6.600 H0 V3 H13Z M2.500 6.600 H34.200 V38.800 a3 3 0 0 1 -3 3 H5.500 a3 3 0 0 1 -3 -3Z M6.100 10.200 V38.200 H30.600 V10.200Z" fill="#444746" fill-rule="evenodd"/><path d="M11.900 18 L24.500 30.600 M24.500 18 L11.900 30.600" stroke="#444746" stroke-width="3.700" fill="none"/></svg>
<div class="a" style="left:695px;top:654px;width:1626px;height:129.500px;border-radius:20px;background:#e3e3e3"></div>
<div class="t" style="left:736.1px;top:698.7px;font-size:38px;color:#1f1f1f;font-weight:400;-webkit-text-stroke:0.55px currentColor;letter-spacing:0.67px;">Items in trash will be deleted forever after 30 days</div>
<div class="t" style="left:2053.9px;top:699.1px;font-size:38px;color:#444746;font-weight:700;-webkit-text-stroke:.6px #e3e3e3;letter-spacing:0.07px;">Empty trash</div>
<div class="t" style="left:697.1px;top:826.0px;font-size:38px;color:#1f1f1f;font-weight:700;-webkit-text-stroke:.6px #fff;letter-spacing:0.45px;">Name</div>
<div class="t" style="left:1585px;top:826.0px;font-size:38px;color:#1f1f1f;font-weight:700;-webkit-text-stroke:.6px #fff;letter-spacing:0.08px;">Owner</div>
<div class="t" style="left:1894.6px;top:826.0px;font-size:38px;color:#1f1f1f;font-weight:700;-webkit-text-stroke:.6px #fff;letter-spacing:-0.66px;">Trash...</div>
<svg class="i" style="left:2035px;top:835.500px" width="20.500" height="11" viewBox="0 0 20 10.500"><path d="M0 0 H20 L10 10.500z" fill="#1f1f1f"/></svg>
<svg class="i" style="left:2126px;top:830.500px" width="26" height="26" viewBox="0 0 26 26"><path d="M13 1.500 V22.500 M1.800 12.200 L13 23.400 L24.200 12.200" fill="none" stroke="#1f1f1f" stroke-width="3.300"/></svg>
<div class="a" style="left:695px;top:887.500px;width:1626px;height:2px;background:#c7c7c7"></div>
<div class="t" style="left:695.7px;top:908.5px;font-size:37px;color:#5c5f5e;font-weight:700;-webkit-text-stroke:.6px #fff;letter-spacing:0.39px;">Last month</div>
<div class="a" style="left:695px;top:959px;width:1626px;height:70.500px;background:#dcebf7"></div><div class="a" style="left:695px;top:959px;width:1626px;height:67.500px;background:#c5e4fa"></div>
<div class="a" style="left:695px;top:958px;width:1626px;height:2px;background:#c0c3c6"></div>
<div class="a" style="left:695px;top:1099px;width:1626px;height:2px;background:#c7c7c7"></div>
<svg class="i" style="left:741.200px;top:977px" width="35.200" height="35.400" viewBox="0 0 35.200 35.400"><rect width="35.200" height="35.400" rx="4.500" fill="#4d84ea"/>
<rect x="7.600" y="7.800" width="19.800" height="4.800" fill="#c9e2fb"/><rect x="7.600" y="15.700" width="19.800" height="4.800" fill="#c9e2fb"/><rect x="7.600" y="23.600" width="14.200" height="4.800" fill="#c9e2fb"/></svg>
<svg class="i" style="left:741.200px;top:1050.200px" width="35.200" height="30" viewBox="0 0 36 30" preserveAspectRatio="none">
<path d="M0 3.500 L3.500 2.200 L7.500 9.500 H11.300 L7.300 1.500 L11.200 1.500 L15.200 9.500 H19 L15 1.500 H18.800 L22.800 9.500 H26.600 L22.600 1.500 H26.400 L30.400 9.500 H34 L30.200 1.500 H33 a3 3 0 0 1 3 3 V27 a3 3 0 0 1 -3 3 H3 a3 3 0 0 1 -3 -3Z" fill="#de4d3a"/></svg>
<div class="t" style="left:821.8px;top:975.5px;font-size:38.2px;color:#1f1f1f;font-weight:700;-webkit-text-stroke:.6px #c5e4fa;letter-spacing:-0.3px;">Untitled document</div>
<div class="t" style="left:821.8px;top:1046.2px;font-size:38.2px;color:#1f1f1f;font-weight:700;-webkit-text-stroke:.6px #fff;letter-spacing:-0.3px;">healthy-eating.mp4</div>
<div class="a" style="left:1588.500px;top:972px;width:38px;height:38px;border-radius:50%;background:#a2a2a2;border:2px solid #e4f1fb;box-sizing:border-box"></div>
<div class="a" style="left:1587px;top:1044px;width:40px;height:40px;border-radius:50%;background:#ccd6df"></div>
<div class="t" style="left:1646px;top:976.0px;font-size:38px;color:#1f4e79;font-weight:400;-webkit-text-stroke:0.25px currentColor;letter-spacing:0px;">me</div>
<div class="t" style="left:1646px;top:1046.8px;font-size:38px;color:#444746;font-weight:400;-webkit-text-stroke:0.55px currentColor;letter-spacing:0px;">me</div>
<div class="t" style="left:1891.4px;top:976.0px;font-size:38px;color:#1f4e79;font-weight:400;-webkit-text-stroke:0.3px currentColor;letter-spacing:-0.37px;">Dec 18, 2024</div>
<div class="t" style="left:1891.4px;top:1046.5px;font-size:38px;color:#444746;font-weight:400;-webkit-text-stroke:0.55px currentColor;letter-spacing:0.33px;">Dec 9, 2024</div>
<svg class="i" style="left:2263.200px;top:979.8px" width="10" height="30" viewBox="0 0 10 30"><circle cx="5" cy="4.200" r="3.300" fill="#1f1f1f"/><circle cx="5" cy="15" r="3.300" fill="#1f1f1f"/><circle cx="5" cy="25.800" r="3.300" fill="#1f1f1f"/></svg>
<svg class="i" style="left:2263.200px;top:1050.5px" width="10" height="30" viewBox="0 0 10 30"><circle cx="5" cy="4.200" r="3.300" fill="#1f1f1f"/><circle cx="5" cy="15" r="3.300" fill="#1f1f1f"/><circle cx="5" cy="25.800" r="3.300" fill="#1f1f1f"/></svg>
<div class="a" style="left:2480px;top:218px;width:8px;height:1423px;background:#fdfefe"></div>
<div class="a" style="left:2406.500px;top:886px;width:40px;height:2px;background:#e1e5ea"></div>
<svg class="i" style="left:2410.500px;top:968.300px" width="30" height="30" viewBox="0 0 30 30"><path d="M15 0v30M0 15h30" stroke="#1f1f1f" stroke-width="3.600" fill="none"/></svg>
<svg class="i" style="left:2418px;top:1569px" width="14" height="22" viewBox="0 0 14 22"><path d="M2 2 L11 11 L2 20" stroke="#5f6368" stroke-width="3.600" fill="none"/></svg>
<svg class="i" style="left:2405px;top:397.500px" width="41" height="41" viewBox="0 0 41 41">
<path d="M3.500 0 H31.500 V8.200 H8.200 V31.500 H0 V3.500 A3.500 3.500 0 0 1 3.500 0Z" fill="#4a80ea"/>
<path d="M31.500 0 H37.500 A3.500 3.500 0 0 1 41 3.500 V8.200 H31.500Z" fill="#2f5fcb"/>
<rect x="31.500" y="8.200" width="9.500" height="23.300" fill="#f2b83c"/>
<rect x="8.200" y="31.500" width="23.300" height="9.500" fill="#4a9e57"/>
<path d="M0 31.500 H8.200 V41 H3.500 A3.500 3.500 0 0 1 0 37.500Z" fill="#2f7c3f"/>
<path d="M31.500 31.500 H41 L31.500 41Z" fill="#e0483a"/>
<rect x="8.200" y="8.200" width="23.300" height="23.300" fill="#fff"/>
<text x="20" y="26.500" font-family="Liberation Sans, sans-serif" font-size="17.500" text-anchor="middle" fill="#5a80dc" letter-spacing="-.8">31</text></svg>
<svg class="i" style="left:2405px;top:519.800px" width="42" height="42" viewBox="0 0 42 42"><rect width="42" height="42" rx="3.500" fill="#f2b83c"/>
<circle cx="20.800" cy="19.200" r="9" fill="#fff"/><rect x="15.600" y="24" width="10.400" height="4" fill="#fff"/><rect x="15.600" y="29.700" width="10.400" height="3.200" fill="#fff8e1"/></svg>
<svg class="i" style="left:2404px;top:643px" width="46" height="44" viewBox="2404 643 46 44">
<circle cx="2426.100" cy="664.700" r="15" fill="none" stroke="#3f7de0" stroke-width="6.400"/>
<path d="M2418.300 663.800 L2425.100 670.600 L2442.800 652" fill="none" stroke="#3a6fd9" stroke-width="6.600"/></svg>
<svg class="i" style="left:2408px;top:767px" width="36" height="40" viewBox="2408 767 36 40">
<circle cx="2425.800" cy="776.400" r="7.100" fill="#2a5bc8"/>
<path d="M2411 805.200 V797 A10 10 0 0 1 2421 787 H2431.200 A10 10 0 0 1 2441.200 797 V799.200 A6 6 0 0 1 2435.200 805.200Z" fill="#7b98ea"/>
<path d="M2416.500 805.200 V794 A7 7 0 0 1 2423.500 787 H2431.200 A10 10 0 0 1 2441.200 797 V799.200 A6 6 0 0 1 2435.200 805.200Z" fill="#2a5bc8"/></svg>
<div class="a" style="left:951px;top:977px;width:704px;height:175.500px;border-radius:8.500px;background:#fff;box-shadow:0 3px 6px 0 rgba(0,0,0,.30),0 7px 14px 3px rgba(0,0,0,.15)"></div>
<div class="a" style="left:951px;top:995.500px;width:704px;height:69px;background:#e4e4e4"></div>
<svg class="i" style="left:979.300px;top:1008.400px" width="42.300" height="42.300" viewBox="0 0 24 24"><path d="M13 3c-4.970 0-9 4.030-9 9H1l3.890 3.890.07.14L9 12H6c0-3.870 3.130-7 7-7s7 3.130 7 7-3.130 7-7 7c-1.930 0-3.680-.79-4.940-2.060l-1.420 1.420C8.270 19.990 10.510 21 13 21c4.970 0 9-4.030 9-9s-4.030-9-9-9zm-1 5v5l4.280 2.540.72-1.210-3.500-2.080V8H12z" fill="#444746"/></svg>
<svg class="i" style="left:985.300px;top:1084px" width="29.400" height="32.200" viewBox="0 0 36.200 41.800" preserveAspectRatio="none"><path d="M13 0 H23.200 V3 H36.200 V6.600 H0 V3 H13Z M2.500 6.600 H34.200 V38.800 a3 3 0 0 1 -3 3 H5.500 a3 3 0 0 1 -3 -3Z M6.100 10.200 V38.200 H30.600 V10.200Z" fill="#444746" fill-rule="evenodd"/><path d="M11.900 18 L24.500 30.600 M24.500 18 L11.900 30.600" stroke="#444746" stroke-width="3.700" fill="none"/></svg>
<div class="t" style="left:1055.7px;top:1014.5px;font-size:29.5px;color:#1f1f1f;font-weight:400;-webkit-text-stroke:0.55px currentColor;letter-spacing:0.57px;">Restore</div>
<div class="t" style="left:1055.7px;top:1084.5px;font-size:29.5px;color:#1f1f1f;font-weight:400;-webkit-text-stroke:0.55px currentColor;letter-spacing:0.83px;">Delete forever</div>
</div></div>
</div></body></html>
